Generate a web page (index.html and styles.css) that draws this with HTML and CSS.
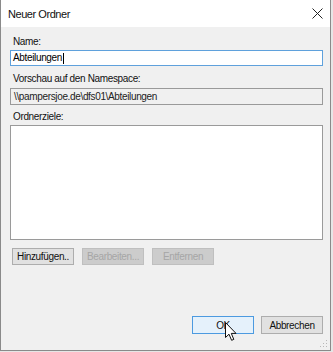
FILE: index.html
```html
<!DOCTYPE html>
<html lang="de">
<head>
<meta charset="utf-8">
<title>Neuer Ordner</title>
<link rel="stylesheet" href="styles.css">
</head>
<body>
<div class="window">
  <div class="titlebar">
    <span class="title">Neuer Ordner</span>
    <svg class="close" width="11" height="11" viewBox="0 0 11 11"><path d="M0.5 0.5 L10.5 10.5 M10.5 0.5 L0.5 10.5" stroke="#222" stroke-width="1" fill="none"/></svg>
  </div>
  <div class="content">
    <label class="label l-name">Name:</label>
    <div class="input"><span>Abteilungen</span><span class="caret"></span></div>
    <label class="label l-preview">Vorschau auf den Namespace:</label>
    <div class="readonly">\\pampersjoe.de\dfs01\Abteilungen</div>
    <label class="label l-targets">Ordnerziele:</label>
    <div class="listbox"></div>
    <div class="row">
      <button class="btn">Hinzufügen..</button>
      <button class="btn disabled">Bearbeiten...</button>
      <button class="btn disabled">Entfernen</button>
    </div>
    <div class="spacer"></div>
    <div class="footer">
      <button class="btn primary">OK</button>
      <button class="btn">Abbrechen</button>
    </div>
  </div>
  <svg class="grip" width="8" height="8" viewBox="0 0 8 8">
    <rect x="6" y="0" width="1" height="1" fill="#b8b8b8"/>
    <rect x="3" y="3" width="1" height="1" fill="#b8b8b8"/>
    <rect x="6" y="3" width="1" height="1" fill="#b8b8b8"/>
    <rect x="0" y="6" width="1" height="1" fill="#b8b8b8"/>
    <rect x="3" y="6" width="1" height="1" fill="#b8b8b8"/>
    <rect x="6" y="6" width="1" height="1" fill="#b8b8b8"/>
  </svg>
  <svg class="cursor" width="12" height="20" viewBox="0 0 12 20">
    <path d="M0.5 0.5 L0.5 15.5 L4 12.2 L6.6 18.3 L8.8 17.4 L6.3 11.4 L11 11.4 Z" fill="#fff" stroke="#111" stroke-width="1" stroke-linejoin="miter"/>
  </svg>
</div>
</body>
</html>
```

FILE: styles.css
```css
html, body {
  margin: 0;
  padding: 0;
  background: #e6e6e6;
}
body {
  width: 333px;
  height: 352px;
  overflow: hidden;
  font-family: "Liberation Sans", Arial, sans-serif;
  font-size: 10px;
  letter-spacing: -0.35px;
  color: #000;
}
.window {
  position: relative;
  box-sizing: border-box;
  width: 331px;
  height: 351px;
  border: 1px solid #8a8a8a;
  border-top: none;
  background: #f0f0f0;
  display: flex;
  flex-direction: column;
}
.titlebar {
  height: 27px;
  flex: none;
  background: #fff;
  display: flex;
  align-items: center;
  justify-content: space-between;
  padding: 0 6px 0 7px;
}
.title {
  font-size: 11px;
  letter-spacing: -0.45px;
  color: #111;
}
.close {
  display: block;
  margin-right: 1px;
}
.content {
  flex: 1;
  display: flex;
  flex-direction: column;
  padding: 8px 7px 16px 9px;
}
.label {
  display: block;
  line-height: 14px;
  padding-left: 3px;
  color: #111;
}
.input {
  margin-top: 1px;
  height: 16px;
  box-sizing: border-box;
  border: 1px solid #5fa1dc;
  background: #fff;
  display: flex;
  align-items: center;
  padding-left: 2px;
  line-height: 14px;
}
.caret {
  display: inline-block;
  width: 1px;
  height: 11px;
  background: #000;
  margin-left: 1px;
}
.l-preview {
  margin-top: 6px;
}
.readonly {
  margin-top: 2px;
  height: 17px;
  box-sizing: border-box;
  border: 1px solid #9a9a9a;
  background: #f0f0f0;
  padding-left: 3px;
  line-height: 15px;
  color: #222;
}
.l-targets {
  margin-top: 5px;
}
.listbox {
  margin-top: 1px;
  height: 115px;
  box-sizing: border-box;
  border: 1px solid #9a9a9a;
  background: #fff;
}
.row {
  display: flex;
  gap: 8px;
  margin-top: 8px;
  padding-left: 2px;
}
.btn {
  box-sizing: border-box;
  width: 62px;
  height: 17px;
  padding: 0;
  font-family: inherit;
  font-size: 10px;
  letter-spacing: -0.35px;
  color: #111;
  background: #e1e1e1;
  border: 1px solid #adadad;
  border-radius: 0;
}
.btn.disabled {
  color: #a6a6a6;
  background: #cccccc;
  border-color: #bfbfbf;
}
.spacer {
  flex: 1;
}
.footer {
  display: flex;
  justify-content: flex-end;
  gap: 7px;
  padding-right: 0;
}
.footer .btn {
  height: 18px;
}
.btn.primary {
  background: #e5f1fb;
  border-color: #4c9ae0;
}
.grip {
  position: absolute;
  right: 2px;
  bottom: 2px;
}
.cursor {
  position: absolute;
  left: 224px;
  top: 322px;
}
```
